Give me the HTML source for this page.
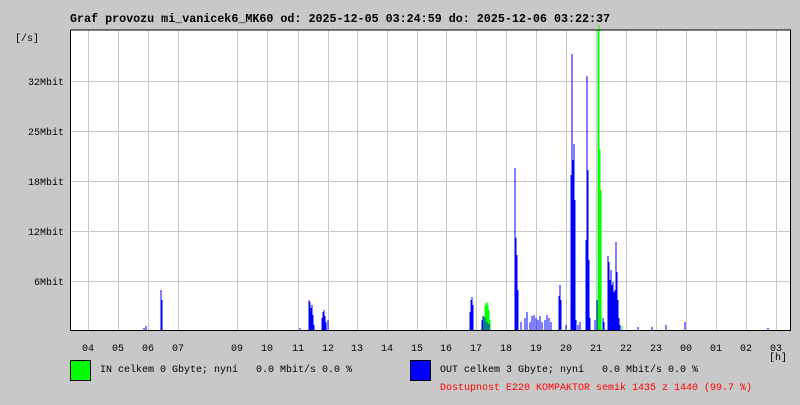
<!DOCTYPE html>
<html><head><meta charset="utf-8"><style>
html,body{margin:0;padding:0;background:#c8c8c8;}
body{width:800px;height:400px;overflow:hidden;}
svg text{font-family:"Liberation Mono","DejaVu Sans Mono",monospace;font-size:10px;fill:#000;white-space:pre;}
</style></head><body>
<svg width="800" height="400" xmlns="http://www.w3.org/2000/svg" xml:space="preserve">
<rect width="800" height="400" fill="#c8c8c8"/>
<text x="70" y="22" style="font-weight:bold;font-size:11.7px">Graf provozu mi_vanicek6_MK60 od: 2025-12-05 03:24:59 do: 2025-12-06 03:22:37</text>
<rect x="70" y="30" width="720" height="300" fill="#fff"/>
<g stroke="#c8c8c8" stroke-width="1">
<path d="M70 81.5H790M70 131.5H790M70 181.5H790M70 231.5H790M70 281.5H790"/>
<path d="M88.5 30V330M118.5 30V330M148.5 30V330M178.5 30V330M237.5 30V330M267.5 30V330M298.5 30V330M328.5 30V330M357.5 30V330M387.5 30V330M417.5 30V330M446.5 30V330M476.5 30V330M506.5 30V330M536.5 30V330M566.5 30V330M596.5 30V330M626.5 30V330M656.5 30V330M686.5 30V330M716.5 30V330M746.5 30V330M776.5 30V330"/>
</g>
<g stroke="#00ff00" stroke-width="1" fill="none">
<path d="M484 330V316M485 330V306M486 330V303M487 330V302M488 330V305M489 330V310M490 330V320M598 330V30M599 330V25M600 330V150M601 330V190M610 330V320M614 330V322M326 330V328M517 330V322M561 330V320M622 330V326"/>
</g>
<g stroke="#0000ff" stroke-width="1" fill="none">
<path d="M144 330V328M146 330V326M161 330V290M162 330V300M300 330V328M309 330V300M310 330V302M311 330V308M312 330V305M313 330V315M314 330V325M322 330V318M323 330V312M324 330V310M325 330V316M326 330V322M328 330V320M470 330V312M471 330V300M472 330V297M473 330V305M482 330V320M483 330V316M485 330V318M487 330V322M489 330V324M515 330V168M516 330V238M517 330V255M518 330V290M521 330V322M525 330V318M527 330V312M530 330V322M532 330V316M534 330V315M536 330V318M538 330V320M540 330V316M542 330V322M545 330V320M547 330V315M549 330V318M551 330V322M559 330V296M560 330V285M561 330V300M566 330V325M571 330V175M572 330V54M573 330V160M574 330V144M575 330V200M576 330V320M578 330V325M580 330V322M586 330V240M587 330V76M588 330V170M589 330V260M590 330V318M595 330V320M597 330V300M603 330V318M604 330V322M608 330V256M609 330V262M610 330V280M611 330V270M612 330V285M613 330V282M614 330V292M615 330V290M616 330V242M617 330V272M618 330V300M619 330V318M620 330V325M638 330V327M652 330V327M666 330V325M685 330V322M768 330V328"/>
</g>
<path d="M70.5 30V330.5H790.5V30H70.5" stroke="#000" fill="none"/>
<text x="15" y="41">[/s]</text>
<g text-anchor="end">
<text x="64" y="85">32Mbit</text><text x="64" y="135">25Mbit</text><text x="64" y="185">18Mbit</text><text x="64" y="235">12Mbit</text><text x="64" y="285">6Mbit</text>
</g>
<g text-anchor="middle">
<text x="88" y="351">04</text><text x="118" y="351">05</text><text x="148" y="351">06</text><text x="178" y="351">07</text><text x="237" y="351">09</text><text x="267" y="351">10</text><text x="298" y="351">11</text><text x="328" y="351">12</text><text x="357" y="351">13</text><text x="387" y="351">14</text><text x="417" y="351">15</text><text x="446" y="351">16</text><text x="476" y="351">17</text><text x="506" y="351">18</text><text x="536" y="351">19</text><text x="566" y="351">20</text><text x="596" y="351">21</text><text x="626" y="351">22</text><text x="656" y="351">23</text><text x="686" y="351">00</text><text x="716" y="351">01</text><text x="746" y="351">02</text><text x="776" y="351">03</text>
<text x="778" y="360">[h]</text>
</g>
<rect x="70.5" y="360.5" width="20" height="20" fill="#00ff00" stroke="#000"/>
<text x="100" y="372">IN celkem 0 Gbyte; nyní   0.0 Mbit/s 0.0 %</text>
<rect x="410.5" y="360.5" width="20" height="20" fill="#0000ff" stroke="#000"/>
<text x="440" y="372">OUT celkem 3 Gbyte; nyní   0.0 Mbit/s 0.0 %</text>
<text x="440" y="390" style="fill:#ff0000">Dostupnost E220 KOMPAKTOR semik 1435 z 1440 (99.7 %)</text>
</svg>
</body></html>
